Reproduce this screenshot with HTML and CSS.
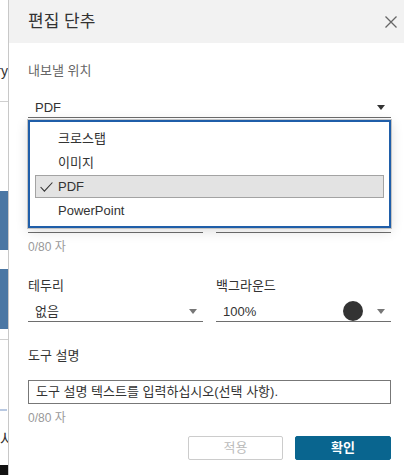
FILE: index.html
```html
<!DOCTYPE html>
<html>
	<head>
		<meta charset="utf-8">
		<title>편집 단추</title>
		<link rel="stylesheet" href="styles.css">
	</head>
	<body>
		<div class="screen">
			<div class="backdrop">
				<div class="bd-top"><span>Story</span></div>
				<div class="bd-tile"></div>
				<div class="bd-tile bd-tile-2"></div>
				<div class="bd-rule"></div>
				<div class="bd-mark"></div>
				<div class="bd-text">사</div>
				<div class="bd-bar"></div>
			</div>

			<div class="dialog">
				<div class="dialog-head">
					<h1>편집 단추</h1>
					<button class="close" title="닫기">
						<svg width="12" height="12" viewBox="0 0 12 12"><path d="M0.5 0.5 L11.5 11.5 M11.5 0.5 L0.5 11.5" stroke="#666" stroke-width="1.3" fill="none"/></svg>
					</button>
				</div>

				<div class="dialog-body">
					<div class="label label-soft">내보낼 위치</div>
					<div class="select select-main"><span class="value">PDF</span><i class="caret caret-dark"></i></div>

					<div class="pair pair-hidden">
						<div class="field"></div>
						<div class="field"></div>
					</div>
					<div class="counter">0/80 자</div>

					<div class="pair pair-opts">
						<div>
							<div class="label">테두리</div>
							<div class="select"><span class="value">없음</span><i class="caret"></i></div>
						</div>
						<div>
							<div class="label">백그라운드</div>
							<div class="select"><span class="value">100%</span><span class="swatch"></span><i class="caret"></i></div>
						</div>
					</div>

					<div class="label label-tip">도구 설명</div>
					<div class="textbox">도구 설명 텍스트를 입력하십시오(선택 사항).</div>
					<div class="counter counter-tip">0/80 자</div>

					<div class="actions">
						<button class="btn btn-off">적용</button>
						<button class="btn btn-primary">확인</button>
					</div>

					<ul class="menu">
						<li><span class="check"></span>크로스탭</li>
						<li><span class="check"></span>이미지</li>
						<li class="selected"><span class="check"><svg width="13" height="10" viewBox="0 0 13 10"><path d="M0.6 5 L4.4 9.2 L12.4 0.5" stroke="#333" stroke-width="1.1" fill="none"/></svg></span>PDF</li>
						<li><span class="check"></span>PowerPoint</li>
					</ul>
				</div>
			</div>
		</div>
	</body>
</html>
```

FILE: styles.css
```css
* {
    box-sizing: border-box;
}
body {
    margin: 0;
    font-family: "Liberation Sans", "Noto Sans CJK KR", sans-serif;
    color: #333;
    background: #fff;
}
.screen {
    display: flex;
    width: 404px;
    height: 475px;
    overflow: hidden;
}

/* page behind the dialog */
.backdrop {
    width: 9px;
    flex: none;
    border-right: 1px solid #c8c8c8;
    display: flex;
    flex-direction: column;
    overflow: hidden;
}
.bd-top {
    height: 102px;
    border-bottom: 1px solid #cfcfcf;
    display: flex;
    justify-content: flex-end;
    padding-top: 62px;
    font-size: 14px;
    line-height: 18px;
    color: #333;
    white-space: nowrap;
}
.bd-tile {
    height: 60px;
    margin-top: 89px;
    background: #4b77a4;
}
.bd-tile-2 {
    margin-top: 19px;
}
.bd-rule {
    margin-top: 10px;
    height: 1px;
    background: #cfcfcf;
}
.bd-mark {
    margin-top: 69px;
    height: 2px;
    width: 7px;
    background: #b9c9e2;
}
.bd-text {
    margin-top: 20px;
    font-size: 16px;
    line-height: 18px;
    white-space: nowrap;
}
.bd-bar {
    margin-top: 16px;
    height: 10px;
    background: #111;
}

/* dialog */
.dialog {
    flex: 1;
    display: flex;
    flex-direction: column;
    background: #fff;
}
.dialog-head {
    height: 43px;
    background: #f2f2f2;
    display: flex;
    align-items: center;
    justify-content: space-between;
    padding: 0 7px 0 19px;
}
.dialog-head h1 {
    margin: 0;
    font-size: 17px;
    font-weight: normal;
    line-height: 22px;
    color: #333;
}
.close {
    border: 0;
    background: none;
    padding: 0;
    width: 12px;
    height: 12px;
    display: flex;
}
.dialog-body {
    position: relative;
    padding: 19px 13px 0 19px;
    display: flex;
    flex-direction: column;
}
.label {
    font-size: 13px;
    line-height: 18px;
    color: #333;
}
.label-soft {
    color: #666;
}
.select {
    height: 27px;
    padding: 7px 6px 0 7px;
    border-bottom: 1px solid #6e6e6e;
    display: flex;
    align-items: flex-start;
    font-size: 13px;
    line-height: 20px;
}
.select .value {
    flex: 1;
}
.select-main {
    margin-top: 11px;
}
.caret {
    margin-top: 7px;
    width: 0;
    height: 0;
    border-left: 4px solid transparent;
    border-right: 4px solid transparent;
    border-top: 5px solid #777;
}
.caret-dark {
    border-top-color: #333;
}
.swatch {
    width: 20px;
    height: 20px;
    margin-top: -1px;
    border-radius: 50%;
    background: #333;
    margin-right: 14px;
}
.pair {
    display: grid;
    grid-template-columns: 1fr 1fr;
    gap: 13px;
}
.pair-hidden {
    margin-top: 87px;
}
.field {
    height: 28px;
    border-bottom: 1px solid #6e6e6e;
}
.counter {
    margin-top: 6px;
    font-size: 12px;
    line-height: 16px;
    color: #999;
}
.pair-opts {
    margin-top: 22px;
}
.label-tip {
    margin-top: 25px;
}
.textbox {
    margin-top: 15px;
    height: 24px;
    border: 1px solid #777;
    padding: 0 7px;
    font-size: 13px;
    line-height: 22px;
    color: #333;
    white-space: nowrap;
    overflow: hidden;
}
.counter-tip {
    margin-top: 6px;
}
.actions {
    margin-top: 10px;
    display: flex;
    justify-content: flex-end;
    gap: 12px;
}
.btn {
    width: 95px;
    height: 24px;
    border-radius: 2px;
    font-family: inherit;
    font-size: 13px;
    line-height: 20px;
    padding: 0;
}
.btn-off {
    background: #fff;
    border: 1px solid #ccc;
    color: #bbb;
}
.btn-primary {
    width: 96px;
    background: #09658f;
    border: 1px solid #09658f;
    color: #fff;
    font-weight: bold;
}

/* open dropdown list */
.menu {
    position: absolute;
    top: 77px;
    left: 19px;
    width: 363px;
    height: 108px;
    margin: 0;
    padding: 4px 5px 4px 5px;
    list-style: none;
    background: #fff;
    border: 2px solid #1f5ea9;
    box-shadow: 0 0 0 1px #c4c4c4, 0 3px 12px rgba(0, 0, 0, 0.14);
}
.menu li {
    height: 24px;
    display: flex;
    align-items: center;
    padding-left: 5px;
    padding-bottom: 2px;
    font-size: 13px;
    color: #333;
}
.menu li.selected {
    background: #e3e3e3;
    border: 1px solid #a3a3a3;
    padding-left: 4px;
    padding-bottom: 0;
    height: 23px;
    margin: 1px 0;
}
.check {
    width: 18px;
    display: flex;
    align-items: center;
}
```
